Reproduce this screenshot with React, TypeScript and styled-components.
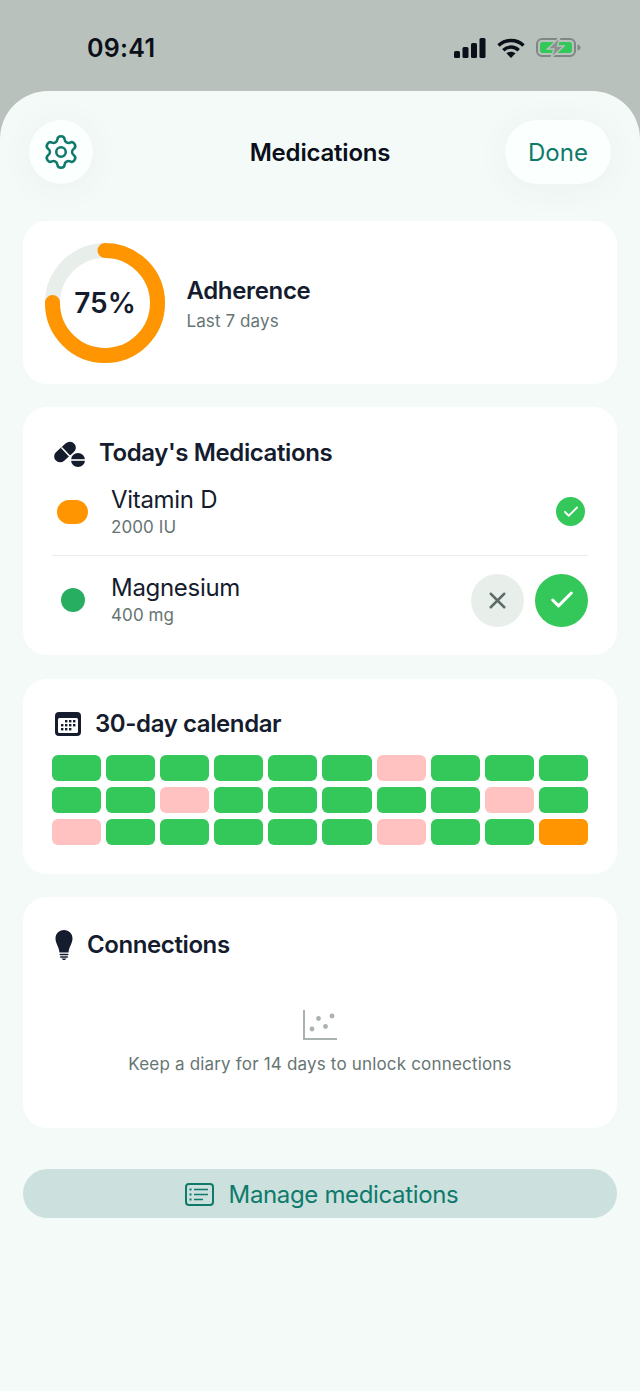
import styled, { createGlobalStyle } from 'styled-components';
import { Check, Settings, X } from 'lucide-react';

const INK = '#141c2e';
const MUTED = '#667573';
const TEAL = '#0f7a6c';
const GREEN = '#34c85a';

const GlobalStyle = createGlobalStyle`
  html, body {
    margin: 0;
    padding: 0;
    background: #b9c1bc;
  }
  body {
    font-family: Inter, "Noto Sans", sans-serif;
    color: ${INK};
  }
`;

const Screen = styled.div`
  width: 640px;
  height: 1391px;
  overflow: hidden;
  display: flex;
  flex-direction: column;
`;

const StatusBar = styled.div`
  height: 91px;
  flex: none;
  display: flex;
  align-items: center;
  justify-content: space-between;
  padding: 4px 59px 0 87px;
  box-sizing: border-box;
`;

const Clock = styled.span`
  font-size: 25px;
  font-weight: 600;
  color: #0b0f1a;
  letter-spacing: 0.3px;
`;

const StatusIcons = styled.div`
  display: flex;
  align-items: center;
  gap: 11px;
`;

const Sheet = styled.main`
  flex: 1;
  background: #f4faf8;
  border-radius: 48px 48px 0 0;
  padding: 29px 23px 0;
  display: flex;
  flex-direction: column;
`;

const Header = styled.header`
  display: grid;
  grid-template-columns: 1fr auto 1fr;
  align-items: center;
  padding: 0 6px;
  margin-bottom: 37px;
`;

const RoundButton = styled.button`
  width: 64px;
  height: 64px;
  border: 0;
  padding: 0;
  border-radius: 50%;
  background: #fbfffe;
  color: ${TEAL};
  display: flex;
  align-items: center;
  justify-content: center;
  box-shadow: 0 4px 34px rgba(40, 80, 70, 0.05);
`;

const DoneButton = styled.button`
  justify-self: end;
  width: 106px;
  height: 64px;
  border: 0;
  padding: 0;
  border-radius: 32px;
  background: #fbfffe;
  color: ${TEAL};
  font: 400 24px Inter, sans-serif;
  box-shadow: 0 4px 34px rgba(40, 80, 70, 0.05);
`;

const ScreenTitle = styled.h1`
  margin: 0;
  font-size: 24px;
  font-weight: 600;
  letter-spacing: -0.2px;
  color: #0b0f1a;
`;

const Card = styled.section<{ $pad: string; $after: number }>`
  background: #fff;
  border-radius: 24px;
  padding: ${({ $pad }) => $pad};
  margin-bottom: ${({ $after }) => $after}px;
`;

const AdherenceRow = styled.div`
  display: flex;
  align-items: center;
  gap: 21.5px;
`;

const Ring = styled.div`
  position: relative;
  width: 120px;
  height: 120px;
`;

const RingLabel = styled.span`
  position: absolute;
  inset: 0;
  display: flex;
  align-items: center;
  justify-content: center;
  font-size: 28px;
  font-weight: 600;
`;

const AdherenceText = styled.div`
  padding-top: 2px;
`;

const CardName = styled.div`
  font-size: 24px;
  font-weight: 600;
  line-height: 32px;
  letter-spacing: -0.35px;
  margin-bottom: 2px;
`;

const Caption = styled.div`
  font-size: 17px;
  line-height: 24px;
  letter-spacing: 0.1px;
  color: ${MUTED};
`;

const CardHeading = styled.div<{ $gap: number; $inset: number }>`
  display: flex;
  align-items: center;
  gap: ${({ $gap }) => $gap}px;
  padding-left: ${({ $inset }) => $inset}px;
  font-size: 24px;
  font-weight: 600;
  line-height: 32px;
  letter-spacing: -0.4px;
`;

const MedRow = styled.div<{ $height: number; $divided?: boolean }>`
  display: flex;
  align-items: center;
  gap: 18px;
  height: ${({ $height }) => $height}px;
  padding-bottom: ${({ $divided }) => ($divided ? '1px' : '0')};
  border-bottom: ${({ $divided }) => ($divided ? '1px solid #e8efeb' : 'none')};
`;

const DotSlot = styled.div`
  width: 41px;
  display: flex;
  justify-content: center;
`;

const Dot = styled.div<{ $width: number; $color: string }>`
  width: ${({ $width }) => $width}px;
  height: 24px;
  border-radius: 12px;
  background: ${({ $color }) => $color};
`;

const MedInfo = styled.div`
  flex: 1;
`;

const MedName = styled.div`
  font-size: 24px;
  line-height: 30px;
  letter-spacing: -0.3px;
`;

const DoneBadge = styled.div`
  width: 29px;
  height: 29px;
  margin-right: 3px;
  border-radius: 50%;
  background: ${GREEN};
  color: #fff;
  display: flex;
  align-items: center;
  justify-content: center;
`;

const Actions = styled.div`
  display: flex;
  gap: 11px;
`;

const ActionButton = styled.button<{ $bg: string; $fg: string }>`
  width: 53px;
  height: 53px;
  border: 0;
  padding: 0;
  border-radius: 50%;
  background: ${({ $bg }) => $bg};
  color: ${({ $fg }) => $fg};
  display: flex;
  align-items: center;
  justify-content: center;
`;

const CalendarGrid = styled.div`
  display: grid;
  grid-template-columns: repeat(10, 1fr);
  gap: 6px 5px;
  margin-top: 15px;
`;

const DayCell = styled.div<{ $color: string }>`
  height: 26px;
  border-radius: 6px;
  background: ${({ $color }) => $color};
`;

const EmptyState = styled.div`
  display: flex;
  flex-direction: column;
  align-items: center;
  margin-top: 49px;
  gap: 12px;
`;

const EmptyText = styled.div`
  font-size: 17px;
  line-height: 24px;
  letter-spacing: 0.18px;
  color: ${MUTED};
`;

const ManageButton = styled.button`
  height: 49px;
  margin-top: 18px;
  border: 0;
  padding: 1px 0 0 3px;
  border-radius: 25px;
  background: #cce1dd;
  color: ${TEAL};
  font: 400 24px Inter, sans-serif;
  letter-spacing: -0.35px;
  display: flex;
  align-items: center;
  justify-content: center;
  gap: 15px;
`;

const dayColors: Record<string, string> = {
  g: GREEN,
  p: '#ffc2c0',
  o: '#ff9500',
};

const days = 'gggggg' + 'pggg' + 'ggpggggg' + 'pg' + 'pggggg' + 'pggo';

function SignalIcon() {
  return (
    <svg width="32" height="20" viewBox="0 0 32 20" fill="#0b0f1a">
      <rect x="0" y="13" width="6" height="7" rx="1.5" />
      <rect x="8.5" y="9" width="6" height="11" rx="1.5" />
      <rect x="17" y="5" width="6" height="15" rx="1.5" />
      <rect x="25.5" y="0" width="6" height="20" rx="1.5" />
    </svg>
  );
}

function WifiIcon() {
  return (
    <svg width="28" height="20" viewBox="0 0 28 20" fill="none" stroke="#0b0f1a" strokeWidth="3.4">
      <path d="M1.5 7.5C8.5 .8 19.5 .8 26.5 7.5" />
      <path d="M6.3 12.2C10.8 8 17.2 8 21.7 12.2" />
      <path d="M14 20l-4.6-4.7c2.600-2.200 6.600-2.200 9.200 0z" fill="#0b0f1a" stroke="none" />
    </svg>
  );
}

function BatteryIcon() {
  return (
    <svg width="45" height="21" viewBox="0 0 45 21" fill="none">
      <rect x="1" y="2" width="38" height="17" rx="5" stroke="#7f8784" strokeWidth="2" />
      <rect x="4" y="5" width="32" height="11" rx="2.5" fill={GREEN} />
      <path d="M41.500 7.500c2 .5 3 1.600 3 3s-1 2.500-3 3z" fill="#7f8784" />
      <path d="M24 0 11.500 12h6.500L15 21 28 9h-6.500z" fill="#8b918e" stroke="#b9c1bc" strokeWidth="1.4" />
    </svg>
  );
}

function AdherenceRing() {
  const radius = 52.5;
  const length = 2 * Math.PI * radius;
  return (
    <Ring>
      <svg width="120" height="120" viewBox="0 0 120 120" fill="none">
        <circle cx="60" cy="60" r={radius} stroke="#e8efeb" strokeWidth="15" />
        <circle
          cx="60"
          cy="60"
          r={radius}
          stroke="#ff9500"
          strokeWidth="15"
          strokeLinecap="round"
          strokeDasharray={`${length * 0.75} ${length}`}
          transform="rotate(-90 60 60)"
        />
      </svg>
      <RingLabel>75%</RingLabel>
    </Ring>
  );
}

function PillsIcon() {
  return (
    <svg width="32" height="28" viewBox="0 0 32 28" fill={INK}>
      <rect x="-1.500" y="7" width="25" height="12" rx="6" transform="rotate(-42 11 13)" />
      <path d="M7.500 8.500 16 17.500" stroke="#fff" strokeWidth="1.600" />
      <circle cx="24" cy="21" r="7" />
      <path d="M16 21h16" stroke="#fff" strokeWidth="1.600" />
    </svg>
  );
}

function CalendarIcon() {
  const dots = [
    [11, 9], [15, 9], [19, 9],
    [7, 13], [11, 13], [15, 13], [19, 13],
    [7, 17], [11, 17], [15, 17],
  ];
  return (
    <svg width="26" height="24" viewBox="0 0 26 24">
      <rect x="0" y="0" width="26" height="24" rx="4" fill={INK} />
      <rect x="3" y="6" width="20" height="15" rx="1.500" fill="#fff" />
      {dots.map(([x, y]) => (
        <rect key={`${x}-${y}`} x={x - 1} y={y - 1} width="2.400" height="2.400" fill={INK} />
      ))}
    </svg>
  );
}

function BulbIcon() {
  return (
    <svg width="18" height="30" viewBox="0 0 18 30" fill={INK}>
      <path d="M9 0C4 0 .5 3.600 .5 8.500c0 5 3.500 8 4 14h9c.5-6 4-9 4-14C17.500 3.600 14 0 9 0z" />
      <rect x="4.500" y="23.700" width="9" height="1.600" rx=".8" />
      <rect x="5" y="26.200" width="8" height="1.500" rx=".75" />
      <path d="M6.500 28.500h5L10 30H8z" />
    </svg>
  );
}

function ScatterIcon() {
  return (
    <svg width="34" height="30" viewBox="0 0 34 30" fill="#a8b3af">
      <path d="M1 0v29h33" fill="none" stroke="#a8b3af" strokeWidth="2" />
      <circle cx="9" cy="19" r="2.400" />
      <circle cx="15.500" cy="8.500" r="2.400" />
      <circle cx="22.500" cy="16.500" r="2.400" />
      <circle cx="29" cy="6" r="2.400" />
    </svg>
  );
}

function ListIcon() {
  return (
    <svg width="29" height="23" viewBox="0 0 29 23" fill="none" stroke={TEAL}>
      <rect x="1" y="1" width="27" height="21" rx="3" strokeWidth="2" />
      <path d="M9 6.500h14M9 11.500h14M9 16.500h9" strokeWidth="1.600" />
      <path d="M4.500 6.500h2M4.500 11.500h2M4.500 16.500h2" strokeWidth="1.800" />
    </svg>
  );
}

export default function App() {
  return (
    <Screen>
      <GlobalStyle />
      <StatusBar>
        <Clock>09:41</Clock>
        <StatusIcons>
          <SignalIcon />
          <WifiIcon />
          <BatteryIcon />
        </StatusIcons>
      </StatusBar>
      <Sheet>
        <Header>
          <RoundButton aria-label="Settings">
            <Settings size={38} strokeWidth={1.6} />
          </RoundButton>
          <ScreenTitle>Medications</ScreenTitle>
          <DoneButton>Done</DoneButton>
        </Header>

        <Card $pad="22px 22px 21px" $after={23}>
          <AdherenceRow>
            <AdherenceRing />
            <AdherenceText>
              <CardName>Adherence</CardName>
              <Caption>Last 7 days</Caption>
            </AdherenceText>
          </AdherenceRow>
        </Card>

        <Card $pad="30px 29px 11px" $after={24}>
          <CardHeading $gap={13} $inset={2}>
            <PillsIcon />
            Today's Medications
          </CardHeading>
          <MedRow $height={85} $divided>
            <DotSlot>
              <Dot $width={31} $color="#ff9500" />
            </DotSlot>
            <MedInfo>
              <MedName>Vitamin D</MedName>
              <Caption>2000 IU</Caption>
            </MedInfo>
            <DoneBadge>
              <Check size={18} strokeWidth={2.4} />
            </DoneBadge>
          </MedRow>
          <MedRow $height={88}>
            <DotSlot>
              <Dot $width={24} $color="#27ae60" />
            </DotSlot>
            <MedInfo>
              <MedName>Magnesium</MedName>
              <Caption>400 mg</Caption>
            </MedInfo>
            <Actions>
              <ActionButton $bg="#e8efeb" $fg="#5f6b6a" aria-label="Skip">
                <X size={27} strokeWidth={2.2} />
              </ActionButton>
              <ActionButton $bg={GREEN} $fg="#fff" aria-label="Take">
                <Check size={28} strokeWidth={2.6} />
              </ActionButton>
            </Actions>
          </MedRow>
        </Card>

        <Card $pad="29px 29px 29px" $after={23}>
          <CardHeading $gap={14} $inset={3}>
            <CalendarIcon />
            30-day calendar
          </CardHeading>
          <CalendarGrid>
            {days.split('').map((day, index) => (
              <DayCell key={index} $color={dayColors[day]} />
            ))}
          </CalendarGrid>
        </Card>

        <Card $pad="32px 29px 52px" $after={23}>
          <CardHeading $gap={14} $inset={3}>
            <BulbIcon />
            Connections
          </CardHeading>
          <EmptyState>
            <ScatterIcon />
            <EmptyText>Keep a diary for 14 days to unlock connections</EmptyText>
          </EmptyState>
        </Card>

        <ManageButton>
          <ListIcon />
          Manage medications
        </ManageButton>
      </Sheet>
    </Screen>
  );
}
